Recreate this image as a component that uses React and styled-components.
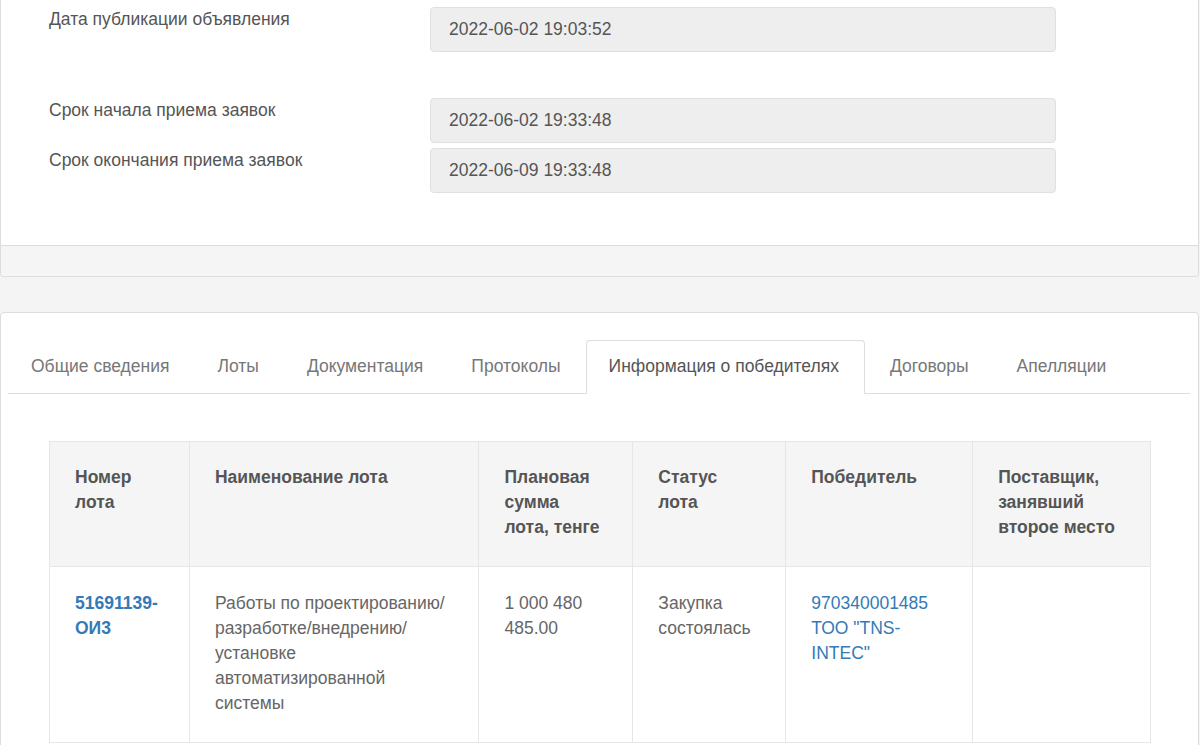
import React from "react";
import styled, { createGlobalStyle } from "styled-components";

const GlobalStyle = createGlobalStyle`
  html, body {
    margin: 0;
    padding: 0;
    background: #f4f4f4;
    font-family: "Liberation Sans", Arial, sans-serif;
    font-size: 17.5px;
    line-height: 25px;
    color: #555;
  }
`;

const Page = styled.div`
  width: 1200px;
`;

const Panel = styled.div`
  background: #fff;
  border: 1px solid #ddd;
  border-top: none;
  border-radius: 0 0 4px 4px;
  margin-right: 1px;
`;

const PanelBody = styled.div`
  padding: 7px 0 52px 48px;
`;

const FormRow = styled.div`
  display: flex;
  align-items: flex-start;
  margin-top: ${(p) => p.gap || 0}px;
`;

const Label = styled.div`
  width: 381px;
  margin-top: 0;
  color: #555;
`;

const Field = styled.div`
  width: 626px;
  height: 45px;
  box-sizing: border-box;
  background: #eee;
  border: 1px solid #e0e0e0;
  border-radius: 4px;
  padding: 0 18px;
  display: flex;
  align-items: center;
  color: #555;
`;

const PanelFooter = styled.div`
  height: 30px;
  background: #f5f5f5;
  border-top: 1px solid #ddd;
  border-radius: 0 0 4px 4px;
`;

const TabsPanel = styled.div`
  margin-top: 35px;
  background: #fff;
  border: 1px solid #ddd;
  border-radius: 4px;
  margin-right: 1px;
  padding: 27px 8px 0 7px;
  min-height: 500px;
`;

const TabList = styled.ul`
  display: flex;
  list-style: none;
  margin: 0;
  padding: 0;
  border-bottom: 1px solid #ddd;
`;

const Tab = styled.li`
  margin-right: 2px;
  margin-bottom: -1px;
  padding: 13px ${(p) => (p.active ? 25 : 22)}px 14px 22px;
  line-height: 25px;
  color: ${(p) => (p.active ? "#555" : "#777")};
  background: ${(p) => (p.active ? "#fff" : "transparent")};
  border: 1px solid ${(p) => (p.active ? "#ddd" : "transparent")};
  border-bottom-color: ${(p) => (p.active ? "#fff" : "transparent")};
  border-radius: 4px 4px 0 0;
`;

const TableWrap = styled.div`
  padding: 47px 0 0 41px;
`;

const Table = styled.table`
  border-collapse: collapse;
  width: 1102px;
`;

const Th = styled.th`
  background: #f5f5f5;
  border: 1px solid #e6e6e6;
  padding: 23px 24px 26px 25px;
  text-align: left;
  vertical-align: top;
  font-weight: bold;
  color: #555;
  width: ${(p) => p.w}px;
  box-sizing: border-box;
`;

const Td = styled.td`
  border: 1px solid #e6e6e6;
  padding: 24px 24px 26px 25px;
  vertical-align: top;
  color: #666;
`;

const Link = styled.a`
  color: #337ab7;
  text-decoration: none;
  font-weight: ${(p) => (p.bold ? "bold" : "normal")};
`;

const tabs = [
  "Общие сведения",
  "Лоты",
  "Документация",
  "Протоколы",
  "Информация о победителях",
  "Договоры",
  "Апелляции",
];

export default function App() {
  return (
    <Page>
      <GlobalStyle />
      <Panel>
        <PanelBody>
          <FormRow>
            <Label>Дата публикации объявления</Label>
            <Field>2022-06-02 19:03:52</Field>
          </FormRow>
          <FormRow gap={46}>
            <Label>Срок начала приема заявок</Label>
            <Field>2022-06-02 19:33:48</Field>
          </FormRow>
          <FormRow gap={5}>
            <Label>Срок окончания приема заявок</Label>
            <Field>2022-06-09 19:33:48</Field>
          </FormRow>
        </PanelBody>
        <PanelFooter />
      </Panel>

      <TabsPanel>
        <TabList>
          {tabs.map((t) => (
            <Tab key={t} active={t === "Информация о победителях"}>
              {t}
            </Tab>
          ))}
        </TabList>
        <TableWrap>
          <Table>
            <thead>
              <tr>
                <Th w={140}>Номер лота</Th>
                <Th w={290}>Наименование лота</Th>
                <Th w={154}>
                  Плановая сумма
                  <br />
                  лота, тенге
                </Th>
                <Th w={153}>Статус лота</Th>
                <Th w={187}>Победитель</Th>
                <Th w={178}>Поставщик, занявший второе место</Th>
              </tr>
            </thead>
            <tbody>
              <tr>
                <Td>
                  <Link bold href="#">51691139-ОИ3</Link>
                </Td>
                <Td>
                  Работы по проектированию/ разработке/внедрению/ установке
                  автоматизированной системы
                </Td>
                <Td>1 000 480 485.00</Td>
                <Td>Закупка состоялась</Td>
                <Td>
                  <Link href="#">970340001485 ТОО "TNS-INTEC"</Link>
                </Td>
                <Td></Td>
              </tr>
            </tbody>
          </Table>
        </TableWrap>
      </TabsPanel>
    </Page>
  );
}
